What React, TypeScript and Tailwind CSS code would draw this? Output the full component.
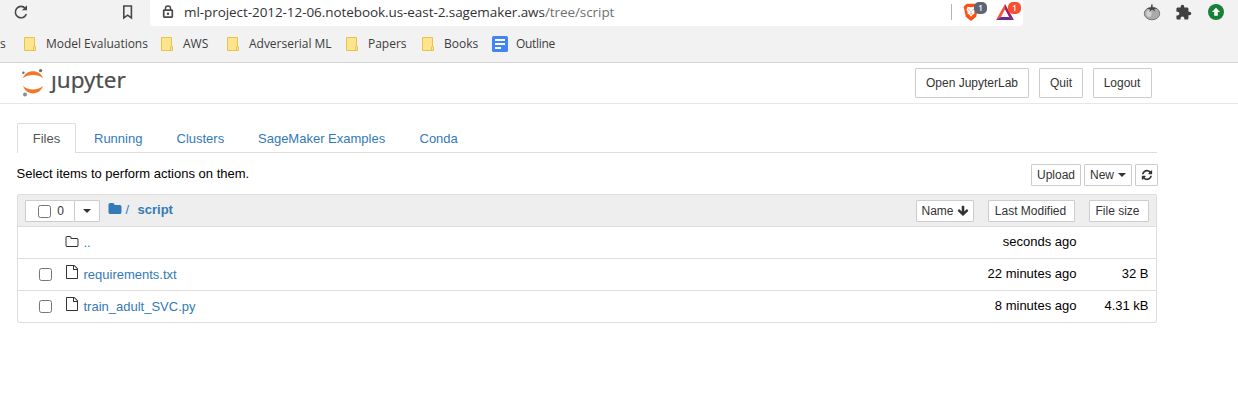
import type { ReactNode } from "react";

const UI = "font-['Open_Sans','Noto_Sans',sans-serif]";

function Icon({ d, size, className = "" }: { d: string; size: number; className?: string }) {
  return (
    <svg width={size} height={size} viewBox="0 0 1792 1792" fill="currentColor" className={`shrink-0 ${className}`}>
      <path d={d} />
    </svg>
  );
}

const FOLDER =
  "M1728 608v704q0 92-66 158t-158 66h-1216q-92 0-158-66t-66-158v-960q0-92 66-158t158-66h320q92 0 158 66t66 158v32h672q92 0 158 66t66 158z";
const FOLDER_O =
  "M1600 1312v-704q0-40-28-68t-68-28h-704q-40 0-68-28t-28-68v-64q0-40-28-68t-68-28h-320q-40 0-68 28t-28 68v960q0 40 28 68t68 28h1216q40 0 68-28t28-68zm128-704v704q0 92-66 158t-158 66h-1216q-92 0-158-66t-66-158v-960q0-92 66-158t158-66h320q92 0 158 66t66 158v32h672q92 0 158 66t66 158z";
const FILE_O =
  "M1596 380q28 28 48 76t20 88v1152q0 40-28 68t-68 28h-1344q-40 0-68-28t-28-68v-1600q0-40 28-68t68-28h896q40 0 88 20t76 48zm-444-244v376h376q-10-29-22-41l-313-313q-12-12-41-22zm384 1528v-1024h-416q-40 0-68-28t-28-68v-416h-768v1536h1280z";
const REFRESH =
  "M1639 1056q0 5-1 7-64 268-268 434.5t-478 166.5q-146 0-282.5-55t-243.5-157l-129 129q-19 19-45 19t-45-19-19-45v-448q0-26 19-45t45-19h448q26 0 45 19t19 45-19 45l-137 137q71 66 161 102t187 36q134 0 250-65t186-179q11-17 53-117 8-23 30-23h192q13 0 22.5 9.5t9.5 22.5zm25-800v448q0 26-19 45t-45 19h-448q-26 0-45-19t-19-45 19-45l138-138q-148-137-349-137-134 0-250 65t-186 179q-11 17-53 117-8 23-30 23h-199q-13 0-22.5-9.5t-9.5-22.5v-7q65-268 270-434.5t480-166.5q146 0 284 55.5t245 156.5l130-129q19-19 45-19t45 19 19 45z";
const ARROW_DOWN =
  "M1675 832q0 53-37 90l-651 652q-39 37-91 37-53 0-90-37l-651-652q-38-36-38-90 0-53 38-91l74-75q39-37 91-37 53 0 90 37l294 294v-704q0-52 38-90t90-38h128q52 0 90 38t38 90v704l294-294q37-37 90-37 52 0 91 37l75 75q37 39 37 91z";

function Btn({ children, className = "" }: { children: ReactNode; className?: string }) {
  return (
    <button
      className={`flex shrink-0 items-center justify-center rounded-[1px] border border-[#ccc] bg-white text-[12px] leading-[18px] whitespace-nowrap text-[#333] ${className}`}
    >
      {children}
    </button>
  );
}

function Caret({ className = "" }: { className?: string }) {
  return <span className={`inline-block h-0 w-0 border-x-4 border-t-4 border-x-transparent border-t-[#333] ${className}`} />;
}

function Box() {
  return <span className="block h-[13px] w-[13px] shrink-0 rounded-[2.5px] border border-[#767676] bg-white" />;
}

function Bookmark({ label, className }: { label: string; className: string }) {
  return (
    <div className={`flex shrink-0 items-center ${className}`}>
      <svg width="13" height="14" viewBox="0 0 13 14" className="mr-[9px] shrink-0">
        <path d="M.5.5h10v9.2h1v3.8H.5z" fill="#ffe490" stroke="#e8c34a" />
        <path d="M9.5 13V10.2q0-.7 1-.7" fill="none" stroke="#e8c34a" />
      </svg>
      <span className="tracking-[-0.020px] whitespace-nowrap">{label}</span>
    </div>
  );
}

function BrowserBar() {
  return (
    <div className={`h-[63px] border-b border-[#d5d5d5] bg-[#f2f2f2] text-[#3c3c3c] ${UI}`}>
      <div className="flex h-[26px] items-start">
        <svg width="16" height="16" viewBox="0 0 16 16" className="mt-[4px] ml-[13px] shrink-0">
          <path d="M12.4 4.4A5.7 5.7 0 1 0 13.4 10" fill="none" stroke="#484848" strokeWidth="1.6" />
          <path d="M8.9 6.3h5.1V1.2z" fill="#484848" />
        </svg>
        <svg width="11" height="15" viewBox="0 0 11 15" className="mt-[5px] ml-[93px] shrink-0">
          <path d="M1.8 1h7.6v12L5.6 10.2 1.8 13z" fill="none" stroke="#484848" strokeWidth="1.6" />
        </svg>
        <div className="ml-[17px] flex h-[26px] w-[873px] shrink-0 items-start rounded-b-[4px] bg-white">
          <svg width="12" height="14" viewBox="0 0 12 14" className="mt-[5px] ml-[12px] shrink-0">
            <path d="M3.4 5V3.6a2.6 2.6 0 0 1 5.2 0V5" fill="none" stroke="#4a4a4a" strokeWidth="1.5" />
            <rect x="1.7" y="5.2" width="8.6" height="7" rx=".6" fill="none" stroke="#4a4a4a" strokeWidth="1.7" />
            <circle cx="6" cy="8.7" r="1.2" fill="#4a4a4a" />
          </svg>
          <div className="mt-[3px] ml-[10px] w-[767px] text-[13.5px] leading-[18px] tracking-[-0.070px] whitespace-nowrap text-[#333]">
            ml-project-2012-12-06.notebook.us-east-2.sagemaker.aws<span className="text-[#707070]">/tree/script</span>
          </div>
          <div className="mt-[4px] h-4 w-px shrink-0 bg-[#b5b5b5]" />
          <div className="relative mt-[3px] ml-[10px] h-[18px] w-[27px] shrink-0">
            <svg width="18" height="18" viewBox="0 0 18 18">
              <path d="M5 .8h8l2.600 2 .9 1.800-.7 1.600-1.600 7.600L9 17.900l-5.200-4.100L2.200 6.200l-.7-1.600.9-1.800z" fill="#fb4f14" />
              <path d="M5.700 3.800l3.300.4 3.300-.4 1.300 2.700-1.300 2.700.2 1.500-1.900 1.100L9 13.700l-1.600-1.900-1.900-1.100.2-1.500-1.300-2.700z" fill="#fff" />
              <path d="M6 6.500l1.700.6M12 6.500l-1.700.6M9 7.800v1.800M7.900 10.500l1.100.5 1.100-.5" stroke="#fb6a35" strokeWidth=".7" fill="none" />
            </svg>
            <span className="absolute top-[-1px] left-[12px] flex h-3 w-[13px] items-center justify-center rounded-[5px] bg-[#5f6475] text-[8px] leading-none font-semibold text-white">1</span>
          </div>
          <div className="relative mt-[3px] ml-[6px] h-[18px] w-[27px] shrink-0">
            <svg width="20" height="18" viewBox="0 0 20 18">
              <path d="M10 1L1 17l5.200-3L10 7z" fill="#ff5030" />
              <path d="M10 1v6l4 7 5 3z" fill="#9e1f63" />
              <path d="M1 17h18l-5-3.200H6.200z" fill="#662d91" />
              <path d="M10 6.500L6 13.900h8z" fill="#fff" />
            </svg>
            <span className="absolute top-[-1px] left-[13px] flex h-3 w-[13px] items-center justify-center rounded-[5px] bg-[#fa4f30] text-[8px] leading-none font-semibold text-white">1</span>
          </div>
        </div>
        <svg width="18" height="18" viewBox="0 0 18 18" className="mt-[3px] ml-[120px] shrink-0">
          <ellipse cx="9" cy="10.500" rx="7.700" ry="6.300" fill="#aaa" stroke="#777" />
          <ellipse cx="6" cy="10.500" rx="2.600" ry="3.400" fill="#d0d0d0" />
          <path d="M3.500 5.400L8 4.700 8.200 1.500l1.300-.3.200 3.300 4.800.7-3.300.8.900 2.500L9 6.400 6.500 9l.4-2.700z" fill="#444" />
        </svg>
        <svg width="17" height="17" viewBox="0 0 24 24" className="mt-[4px] ml-[14px] shrink-0">
          <path
            d="M20.500 11H19V7c0-1.100-.9-2-2-2h-4V3.500a2.500 2.500 0 0 0-5 0V5H4c-1.100 0-1.990.9-1.990 2v3.800H3.500c1.490 0 2.700 1.210 2.700 2.700s-1.210 2.700-2.700 2.700H2V20c0 1.100.9 2 2 2h3.800v-1.500c0-1.490 1.210-2.700 2.700-2.700s2.700 1.210 2.700 2.700V22H17c1.100 0 2-.9 2-2v-4h1.500a2.500 2.500 0 0 0 0-5z"
            fill="#404040"
          />
        </svg>
        <svg width="16" height="16" viewBox="0 0 16 16" className="mt-[4px] ml-[16px] shrink-0">
          <circle cx="8" cy="8" r="8" fill="#188038" />
          <path d="M8 3.700l4 4.200H9.800v3.900H6.200V7.900H4z" fill="#fff" />
        </svg>
      </div>
      <div className="flex h-[36px] items-center text-[12px] leading-[16px]">
        <span className="w-[24px] shrink-0">s</span>
        <Bookmark label="Model Evaluations" className="w-[137px]" />
        <Bookmark label="AWS" className="w-[66px]" />
        <Bookmark label="Adverserial ML" className="w-[119px]" />
        <Bookmark label="Papers" className="w-[76px]" />
        <Bookmark label="Books" className="w-[70px]" />
        <svg width="16" height="16" viewBox="0 0 16 16" className="shrink-0">
          <rect width="16" height="16" rx="1.500" fill="#4285f4" />
          <path d="M3 4h10M3 8h10M3 12h6" stroke="#fff" strokeWidth="2" />
        </svg>
        <span className="ml-[8px] tracking-[-0.300px]">Outline</span>
      </div>
    </div>
  );
}

function Header() {
  return (
    <header className="flex h-[41px] border-b border-[#e7e7e7] bg-white">
      <div className="flex w-[915px] shrink-0" aria-label="jupyter">
        <svg width="24" height="30" viewBox="0 0 24 30" className="mt-[4px] ml-[21px] shrink-0">
          <path d="M2 11.200C3.500 6.500 7.500 4.200 12 4.200s8.500 2.300 10 7C19.500 9 16 7.900 12 7.900S4.500 9 2 11.200z" fill="#f37726" />
          <path d="M2 18.800c1.500 4.900 5.500 7.600 10 7.600s8.500-2.700 10-7.600c-2.500 2.500-6 3.700-10 3.700s-7.500-1.200-10-3.700z" fill="#f37726" />
          <circle cx="19.600" cy="3.600" r="1.700" fill="#6f6f6f" />
          <circle cx="2.400" cy="5.800" r="1.200" fill="#6f6f6f" />
          <circle cx="4" cy="27.600" r="2" fill="#8c8c8c" />
        </svg>
        <span className="mt-[1px] ml-[6px] font-['Noto_Sans','Open_Sans',sans-serif] text-[22.500px] leading-[32px] text-[#4e4e4e] [-webkit-text-stroke:0.200px_#4e4e4e]">ȷupyter</span>
      </div>
      <div className="flex pt-[5px]">
        <Btn className="mr-[10px] h-[30px] w-[114px]">Open JupyterLab</Btn>
        <Btn className="mr-[10px] h-[30px] w-[44px]">Quit</Btn>
        <Btn className="h-[30px] w-[59px] pr-px">Logout</Btn>
      </div>
    </header>
  );
}

function Row({ icon, name, modified, size, check = true }: { icon: ReactNode; name: string; modified: string; size: string; check?: boolean }) {
  return (
    <div className="flex h-[32px] items-start border-t border-[#ddd] pr-[7.500px]">
      <div className="mt-[9px] ml-[21px] w-[26px] shrink-0">{check && <Box />}</div>
      <div className="w-[18.500px] shrink-0 text-[#333]">{icon}</div>
      <span className="mt-[6px] grow text-[#337ab7]">{name}</span>
      <span className="mt-[5px] text-right">{modified}</span>
      <span className="mt-[5px] w-[72px] shrink-0 text-right">{size}</span>
    </div>
  );
}

export default function App() {
  return (
    <div className="h-[402px] w-[1238px] overflow-hidden bg-white font-['Liberation_Sans',Arial,sans-serif] text-[13px] leading-[20px] text-black">
      <BrowserBar />
      <Header />
      <main className="ml-[17px] w-[1141px] pt-[19px]">
        <nav className="flex h-[30px] w-[1140px] border-b border-[#ddd] text-[#337ab7]">
          <span className="-mb-px h-[30px] w-[59px] shrink-0 rounded-t-[2px] border border-b-0 border-[#ddd] bg-white pt-[5px] text-center text-[#555]">Files</span>
          <span className="w-[83px] shrink-0 pt-[6px] pl-[18px]">Running</span>
          <span className="w-[81px] shrink-0 pt-[6px] pl-[17.500px]">Clusters</span>
          <span className="w-[161px] shrink-0 pt-[6px] pl-[18px]">SageMaker Examples</span>
          <span className="pt-[6px] pl-[18.500px]">Conda</span>
        </nav>
        <div className="flex h-[41px] items-start pt-[11px]">
          <span className="-ml-[0.500px] grow">Select items to perform actions on them.</span>
          <div className="flex gap-[3px]">
            <Btn className="h-[22px] w-[50px]">Upload</Btn>
            <Btn className="h-[22px] w-[48px]">
              New
              <Caret className="ml-[4px]" />
            </Btn>
            <Btn className="h-[22px] w-[23px]">
              <Icon d={REFRESH} size={12} />
            </Btn>
          </div>
        </div>
        <section className="w-[1140px] rounded-[2px] border border-[#ddd]">
          <div className="flex h-[31px] items-start bg-[#eee] pt-[5px] pr-[7px] pl-[7px]">
            <Btn className="h-[22px] w-[50px] gap-[6px] pl-[2px]">
              <Box />
              <span className="text-[12px]">0</span>
            </Btn>
            <Btn className="-ml-px h-[22px] w-[26px]">
              <Caret />
            </Btn>
            <Icon d={FOLDER} size={14} className="mt-[2px] ml-[7.500px] text-[#337ab7]" />
            <span className="ml-[4px] w-[12px] text-[#337ab7]">/</span>
            <span className="grow font-bold text-[#337ab7]">script</span>
            <Btn className="mr-[14px] h-[22px] w-[58px] gap-[3px]">
              Name
              <Icon d={ARROW_DOWN} size={12} />
            </Btn>
            <Btn className="mr-[14px] h-[22px] w-[87px] pr-[2px]">Last Modified</Btn>
            <Btn className="h-[22px] w-[60px] pr-[3px]">File size</Btn>
          </div>
          <Row check={false} icon={<Icon d={FOLDER_O} size={14} className="mt-[8px]" />} name=".." modified="seconds ago" size="" />
          <Row icon={<Icon d={FILE_O} size={14} className="-ml-[0.500px] mt-[6px]" />} name="requirements.txt" modified="22 minutes ago" size="32 B" />
          <Row icon={<Icon d={FILE_O} size={14} className="-ml-[0.500px] mt-[6px]" />} name="train_adult_SVC.py" modified="8 minutes ago" size="4.31 kB" />
        </section>
      </main>
    </div>
  );
}
